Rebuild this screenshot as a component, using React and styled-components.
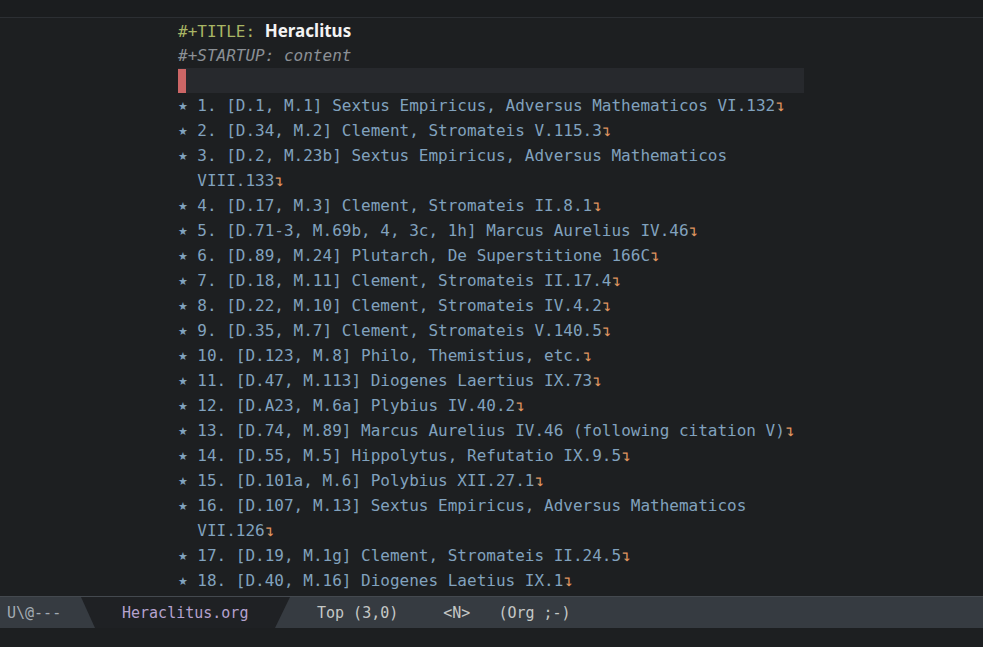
import styled, { createGlobalStyle } from "styled-components";

const GlobalStyle = createGlobalStyle`
  html, body {
    margin: 0;
    padding: 0;
    background: #1d1f21;
  }
  body {
    font-family: "DejaVu Sans Mono", "Liberation Mono", monospace;
  }
`;

// [number, heading text, wrapped tail]
const items = [
  ["1.", "[D.1, M.1] Sextus Empiricus, Adversus Mathematicos VI.132"],
  ["2.", "[D.34, M.2] Clement, Stromateis V.115.3"],
  ["3.", "[D.2, M.23b] Sextus Empiricus, Adversus Mathematicos", "VIII.133"],
  ["4.", "[D.17, M.3] Clement, Stromateis II.8.1"],
  ["5.", "[D.71-3, M.69b, 4, 3c, 1h] Marcus Aurelius IV.46"],
  ["6.", "[D.89, M.24] Plutarch, De Superstitione 166C"],
  ["7.", "[D.18, M.11] Clement, Stromateis II.17.4"],
  ["8.", "[D.22, M.10] Clement, Stromateis IV.4.2"],
  ["9.", "[D.35, M.7] Clement, Stromateis V.140.5"],
  ["10.", "[D.123, M.8] Philo, Themistius, etc."],
  ["11.", "[D.47, M.113] Diogenes Laertius IX.73"],
  ["12.", "[D.A23, M.6a] Plybius IV.40.2"],
  ["13.", "[D.74, M.89] Marcus Aurelius IV.46 (following citation V)"],
  ["14.", "[D.55, M.5] Hippolytus, Refutatio IX.9.5"],
  ["15.", "[D.101a, M.6] Polybius XII.27.1"],
  ["16.", "[D.107, M.13] Sextus Empiricus, Adversus Mathematicos", "VII.126"],
  ["17.", "[D.19, M.1g] Clement, Stromateis II.24.5"],
  ["18.", "[D.40, M.16] Diogenes Laetius IX.1"],
];

const App = () => {
  return (
    <Frame>
      <GlobalStyle />
      <TopBar />
      <Buffer>
        <Line>
          <Keyword>#+TITLE: </Keyword>
          <Title>Heraclitus</Title>
        </Line>
        <Line>
          <Meta>#+STARTUP: content</Meta>
        </Line>
        <CurrentLine>
          <Cursor />
        </CurrentLine>
        {items.map(([num, text, tail]) => (
          <Heading key={num}>
            <Line>
              <Star>★</Star> {num} {text}
              {!tail && <Fold>↴</Fold>}
            </Line>
            {tail && (
              <Line $indent>
                {tail}
                <Fold>↴</Fold>
              </Line>
            )}
          </Heading>
        ))}
      </Buffer>
      <ModeLine>
        <State>U\@---</State>
        <BufferName>Heraclitus.org</BufferName>
        <Segment $gap={27}>Top (3,0)</Segment>
        <Segment $gap={45}>&lt;N&gt;</Segment>
        <Segment $gap={28}>(Org ;-)</Segment>
      </ModeLine>
      <MiniBuffer />
    </Frame>
  );
};

const Frame = styled.div`
  display: flex;
  flex-direction: column;
  height: 100vh;
  overflow: hidden;
  background: #1d1f21;
`;

const TopBar = styled.div`
  flex: 0 0 17px;
  background: #1b1d1f;
  border-bottom: 1px solid #2c2f33;
`;

const Buffer = styled.div`
  flex: 1;
  display: flex;
  flex-direction: column;
  padding-left: 178px;
  font-size: 16px;
  line-height: 25px;
  color: #81a2be;
  overflow: hidden;
`;

const Line = styled.div`
  height: 25px;
  white-space: pre;
  padding-left: ${(p) => (p.$indent ? "2ch" : "0")};
`;

const Keyword = styled.span`
  color: #a9b665;
`;

const Title = styled.span`
  font-family: "Noto Sans", "DejaVu Sans", sans-serif;
  font-weight: 700;
  font-size: 17px;
  color: #f3f3f3;
`;

const Meta = styled.span`
  font-style: italic;
  color: #8b9096;
`;

const CurrentLine = styled.div`
  width: 626px;
  height: 25px;
  background: #27292d;
  display: flex;
`;

const Cursor = styled.div`
  width: 8px;
  height: 24px;
  margin-top: 1px;
  background: #cc6666;
`;

const Heading = styled.div`
  display: flex;
  flex-direction: column;
`;

const Star = styled.span`
  display: inline-block;
  width: 9.63px;
  text-align: left;
  font-family: "DejaVu Sans", sans-serif;
  font-size: 11px;
  vertical-align: top;
  line-height: 27px;
  color: #81a2be;
`;

const Fold = styled.span`
  color: #de935f;
`;

const ModeLine = styled.div`
  flex: 0 0 31px;
  display: flex;
  align-items: stretch;
  background: #363b41;
  border-top: 1px solid #44494f;
  font-size: 15px;
  color: #c5c8c6;
`;

const State = styled.div`
  width: 74px;
  padding-left: 7px;
  display: flex;
  align-items: center;
  color: #a3abb3;
`;

const BufferName = styled.div`
  width: 209px;
  box-sizing: border-box;
  padding-left: 41px;
  display: flex;
  align-items: center;
  background: #1f2124;
  color: #b5a2cf;
  clip-path: polygon(0 0, 100% 0, calc(100% - 15px) 100%, 14px 100%);
`;

const Segment = styled.div`
  margin-left: ${(p) => p.$gap}px;
  display: flex;
  align-items: center;
  white-space: pre;
`;

const MiniBuffer = styled.div`
  flex: 0 0 19px;
  background: #1d1f21;
`;

export default App;
